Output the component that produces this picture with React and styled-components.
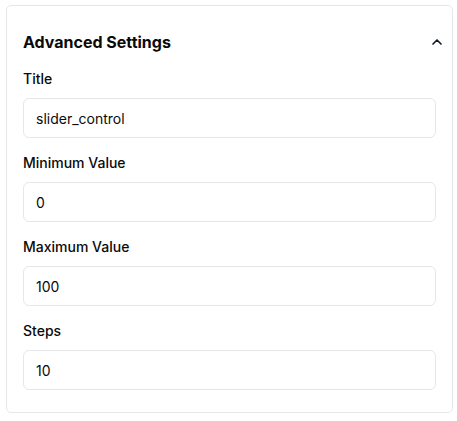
import React from 'react'
import { styled, createGlobalStyle } from 'styled-components';

const GlobalStyle = createGlobalStyle`
  body {
    margin: 0;
    background: #fff;
    font-family: Inter, "Liberation Sans", sans-serif;
    color: #111827;
  }
`;

const fields = [
  { label: 'Title', value: 'slider_control' },
  { label: 'Minimum Value', value: '0' },
  { label: 'Maximum Value', value: '100' },
  { label: 'Steps', value: '10' },
];

function App() {
  return (
    <>
      <GlobalStyle />
      <Page>
        <Card>
          <Header>
            <Heading>Advanced Settings</Heading>
            <Toggle aria-label="collapse">
              <svg width="16" height="16" viewBox="0 0 24 24" fill="none" stroke="currentColor" strokeWidth="2.5" strokeLinecap="round" strokeLinejoin="round">
                <path d="m18 15-6-6-6 6" />
              </svg>
            </Toggle>
          </Header>
          <Fields>
            {fields.map((f) => (
              <Field key={f.label}>
                <Label>{f.label}</Label>
                <Input defaultValue={f.value} />
              </Field>
            ))}
          </Fields>
        </Card>
      </Page>
    </>
  );
}

const Page = styled.div`
  padding: 5px 4px 0 6px;
`;
const Card = styled.div`
  box-sizing: border-box;
  width: 447px;
  border: 1px solid #e5e7eb;
  border-radius: 5px;
  padding: 23px 16px 22px 16px;
`;
const Header = styled.div`
  display: flex;
  align-items: center;
  justify-content: space-between;
  height: 26px;
`;
const Heading = styled.h3`
  margin: 0;
  font-size: 16px;
  font-weight: 700;
  line-height: 26px;
  color: #0a0a0a;
`;
const Toggle = styled.span`
  display: flex;
  margin-right: -9px;
  color: #111827;
`;
const Fields = styled.div`
  display: flex;
  flex-direction: column;
  gap: 15px;
  margin-top: 14px;
`;
const Field = styled.div`
  display: flex;
  flex-direction: column;
  gap: 9px;
`;
const Label = styled.label`
  font-size: 14px;
  font-weight: 500;
  line-height: 20px;
  color: #0a0a0a;
`;
const Input = styled.input`
  box-sizing: border-box;
  height: 40px;
  width: 100%;
  border: 1px solid #e5e7eb;
  border-radius: 6px;
  padding: 0 12px;
  font-family: Inter, "Liberation Sans", sans-serif;
  font-size: 14px;
  color: #0a0a0a;
  background: #fff;
  outline: none;
`;

export default App
